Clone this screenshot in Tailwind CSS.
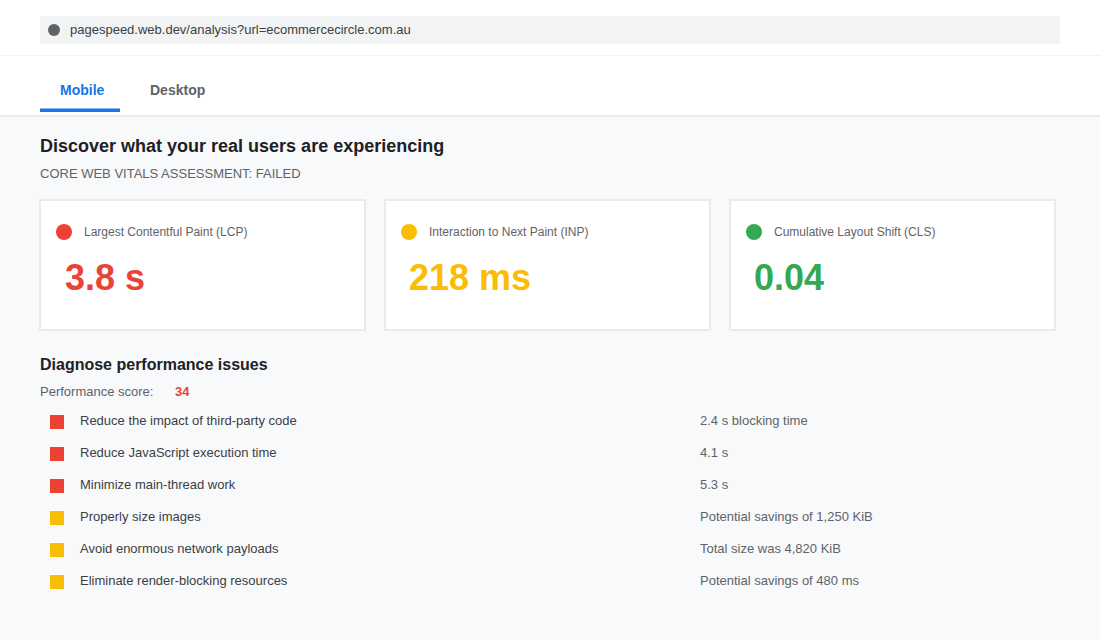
<!DOCTYPE html>
<html lang="en">
<head>
  <meta charset="UTF-8" />
  <title>PageSpeed Insights</title>
  <script src="https://cdn.jsdelivr.net/npm/@tailwindcss/browser@4"></script>
</head>
<body class="h-[640px] overflow-hidden bg-[#f8f9fb] font-['Liberation_Sans',Arial,sans-serif]">
  <!-- url bar -->
  <div class="h-14 bg-white border-b border-[#f1f3f4] px-10 pt-4">
    <div class="h-7 w-[1020px] bg-[#f1f3f4] flex items-center px-2 gap-2.5">
      <span class="w-3 h-3 rounded-full bg-[#5f6368]"></span>
      <span class="text-[13px] text-[#3c4043]">pagespeed.web.dev/analysis?url=ecommercecircle.com.au</span>
    </div>
  </div>

  <!-- tabs -->
  <div class="h-[61px] bg-white border-b-2 border-[#e8eaed] px-10 flex">
    <div class="w-20 h-[56px] pt-[26px] pl-5 border-b-[3px] border-[#1a73e8] shadow-[inset_0_-1px_0_#8ab8f4] text-sm leading-4 font-bold text-[#1a73e8]">Mobile</div>
    <div class="h-[55px] pt-[26px] pl-[30px] text-sm leading-4 font-bold text-[#5f6368]">Desktop</div>
  </div>

  <main class="px-10 pt-[18px]">
    <h2 class="text-lg leading-[22px] font-bold text-[#202124]">Discover what your real users are experiencing</h2>
    <p class="mt-2 text-[13px] leading-[18px] text-[#5f6368]">CORE WEB VITALS ASSESSMENT: FAILED</p>

    <div class="mt-4 -ml-px flex gap-[18px]">
      <div class="w-[327px] h-[132px] bg-white border-2 border-[#e8eaed] px-[15px] pt-[23px]">
        <div class="flex items-center gap-3 h-4">
          <span class="w-4 h-4 rounded-full bg-[#ea4335]"></span>
          <span class="text-xs text-[#5f6368]">Largest Contentful Paint (LCP)</span>
        </div>
        <div class="mt-[18px] pl-[9px] text-4xl leading-10 font-bold text-[#ea4335]">3.8 s</div>
      </div>
      <div class="w-[327px] h-[132px] bg-white border-2 border-[#e8eaed] px-[15px] pt-[23px]">
        <div class="flex items-center gap-3 h-4">
          <span class="w-4 h-4 rounded-full bg-[#fbbc04]"></span>
          <span class="text-xs text-[#5f6368]">Interaction to Next Paint (INP)</span>
        </div>
        <div class="mt-[18px] pl-2 text-4xl leading-10 font-bold text-[#fbbc04]">218 ms</div>
      </div>
      <div class="w-[327px] h-[132px] bg-white border-2 border-[#e8eaed] px-[15px] pt-[23px]">
        <div class="flex items-center gap-3 h-4">
          <span class="w-4 h-4 rounded-full bg-[#34a853]"></span>
          <span class="text-xs text-[#5f6368]">Cumulative Layout Shift (CLS)</span>
        </div>
        <div class="mt-[18px] pl-2 text-4xl leading-10 font-bold text-[#34a853]">0.04</div>
      </div>
    </div>

    <h3 class="mt-6 text-base leading-5 font-bold text-[#202124]">Diagnose performance issues</h3>
    <div class="mt-[9px] flex text-[13px] leading-4 text-[#5f6368]">
      <span class="w-[135px]">Performance score:</span>
      <span class="font-bold text-[#ea4335]">34</span>
    </div>

    <ul class="mt-[5px] text-[13px] text-[#5f6368]">
      <li class="h-8 flex items-center pl-2.5"><span class="w-3.5 h-3.5 mt-0.5 bg-[#ea4335]"></span><span class="w-[620px] ml-4 text-[#3c4043]">Reduce the impact of third-party code</span><span>2.4 s blocking time</span></li>
      <li class="h-8 flex items-center pl-2.5"><span class="w-3.5 h-3.5 mt-0.5 bg-[#ea4335]"></span><span class="w-[620px] ml-4 text-[#3c4043]">Reduce JavaScript execution time</span><span>4.1 s</span></li>
      <li class="h-8 flex items-center pl-2.5"><span class="w-3.5 h-3.5 mt-0.5 bg-[#ea4335]"></span><span class="w-[620px] ml-4 text-[#3c4043]">Minimize main-thread work</span><span>5.3 s</span></li>
      <li class="h-8 flex items-center pl-2.5"><span class="w-3.5 h-3.5 mt-0.5 bg-[#fbbc04]"></span><span class="w-[620px] ml-4 text-[#3c4043]">Properly size images</span><span>Potential savings of 1,250 KiB</span></li>
      <li class="h-8 flex items-center pl-2.5"><span class="w-3.5 h-3.5 mt-0.5 bg-[#fbbc04]"></span><span class="w-[620px] ml-4 text-[#3c4043]">Avoid enormous network payloads</span><span>Total size was 4,820 KiB</span></li>
      <li class="h-8 flex items-center pl-2.5"><span class="w-3.5 h-3.5 mt-0.5 bg-[#fbbc04]"></span><span class="w-[620px] ml-4 text-[#3c4043]">Eliminate render-blocking resources</span><span>Potential savings of 480 ms</span></li>
    </ul>
  </main>
</body>
</html>
